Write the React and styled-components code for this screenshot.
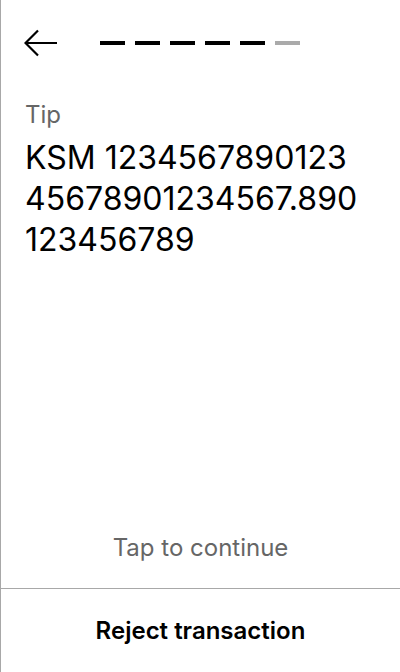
import React from "react";
import styled, { createGlobalStyle } from "styled-components";

const GlobalStyle = createGlobalStyle`
  html, body {
    margin: 0;
    padding: 0;
    background: #ffffff;
  }
  body {
    font-family: "Inter", "Noto Sans", sans-serif;
  }
`;

const Screen = styled.div`
  box-sizing: border-box;
  width: 400px;
  height: 672px;
  display: flex;
  flex-direction: column;
  border-left: 1px solid #a8a8a8;
  background: #ffffff;
`;

const TopBar = styled.div`
  display: flex;
  align-items: center;
  height: 86px;
  padding-left: 23px;
`;

const BackButton = styled.button`
  display: flex;
  align-items: center;
  justify-content: center;
  width: 34px;
  height: 30px;
  padding: 0;
  border: none;
  background: none;
  cursor: pointer;
`;

const Steps = styled.div`
  display: flex;
  gap: 10px;
  margin-left: 42px;
`;

const Step = styled.div`
  width: 25px;
  height: 4px;
  background: ${(p) => (p.$done ? "#000000" : "#aaaaaa")};
`;

const Body = styled.div`
  flex: 1;
  display: flex;
  flex-direction: column;
  padding: 13px 24px 0 24px;
`;

const Label = styled.div`
  font-size: 24px;
  line-height: 32px;
  color: #666666;
`;

const Amount = styled.div`
  font-size: 32px;
  line-height: 41px;
  color: #000000;
  margin-top: 6px;
`;

const Hint = styled.div`
  margin-top: auto;
  text-align: center;
  font-size: 24px;
  line-height: 32px;
  color: #666666;
  padding-bottom: 24px;
`;

const Footer = styled.button`
  display: flex;
  align-items: center;
  justify-content: center;
  height: 84px;
  border: none;
  border-top: 1px solid #a8a8a8;
  background: #ffffff;
  font-family: inherit;
  font-size: 24px;
  font-weight: 600;
  color: #000000;
  cursor: pointer;
`;

const steps = [true, true, true, true, true, false];

export default function App() {
  return (
    <>
      <GlobalStyle />
      <Screen>
        <TopBar>
          <BackButton aria-label="Back">
            <svg width="34" height="28" viewBox="0 0 34 28" fill="none">
              <path
                d="M1.5 14 H33 M14 1.5 L1.5 14 L14 26.5"
                stroke="#000"
                strokeWidth="2.2"
              />
            </svg>
          </BackButton>
          <Steps>
            {steps.map((done, i) => (
              <Step key={i} $done={done} />
            ))}
          </Steps>
        </TopBar>
        <Body>
          <Label>Tip</Label>
          <Amount>KSM 1234567890123 45678901234567.890 123456789</Amount>
          <Hint>Tap to continue</Hint>
        </Body>
        <Footer>Reject transaction</Footer>
      </Screen>
    </>
  );
}
